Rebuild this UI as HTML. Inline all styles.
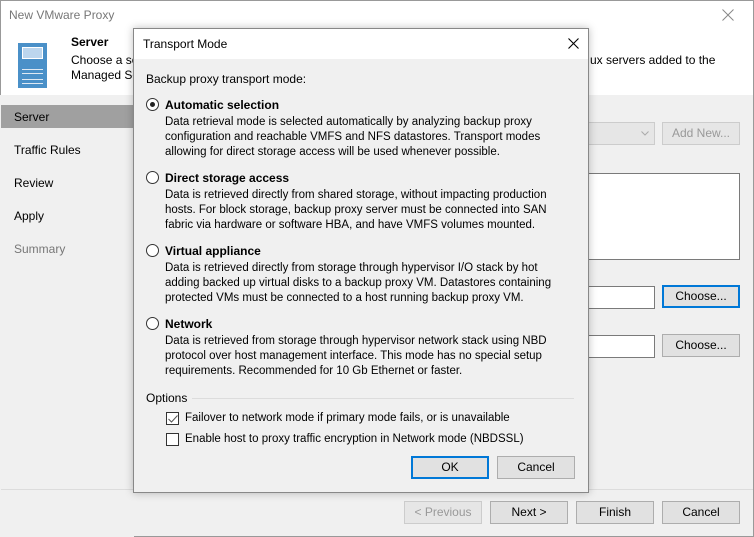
<!DOCTYPE html>
<html><head><style>
*{margin:0;padding:0;box-sizing:border-box}
body{width:754px;height:537px;position:relative;overflow:hidden;background:#f0f0f0;font-family:"Liberation Sans",sans-serif;font-size:12px;color:#000}
.a{position:absolute;white-space:nowrap}
.btn{position:absolute;background:#e1e1e1;border:1px solid #adadad;text-align:center;line-height:21px;font-size:12px}
.rad{position:absolute;width:13px;height:13px;border:1px solid #333;border-radius:50%;background:#fff}
.cb{position:absolute;width:13px;height:13px;border:1px solid #333;background:#fff}
.d{position:absolute;left:165px;line-height:15px;font-size:11.5px;white-space:nowrap}
.h{position:absolute;left:165px;font-weight:bold;font-size:12px}
</style></head><body>
<div class="a" style="left:0;top:0;width:754px;height:95px;background:#fff"></div>
<div class="a" style="left:0;top:0;width:754px;height:537px;border:1px solid #999"></div>
<div class="a" style="left:9px;top:8px;color:#777;font-size:12px">New VMware Proxy</div>
<svg class="a" style="left:722px;top:9px" width="12" height="12"><path d="M0.5 0.5L11.5 11.5M11.5 0.5L0.5 11.5" stroke="#888" stroke-width="1"/></svg>
<div class="a" style="left:18px;top:43px;width:29px;height:45px;background:#4a90c8"></div>
<div class="a" style="left:22px;top:47px;width:21px;height:12px;background:#bcd6ee;border:1px solid #fff"></div>
<div class="a" style="left:22px;top:69px;width:21px;height:15px;border:1px solid #dfe9f3;border-left:none;border-right:none"></div>
<div class="a" style="left:22px;top:73px;width:21px;height:7px;border-top:1px solid #dfe9f3;border-bottom:1px solid #dfe9f3"></div>
<div class="a" style="left:71px;top:35px;font-weight:bold">Server</div>
<div class="a" style="left:71px;top:53px">Choose a se</div>
<div class="a" style="left:71px;top:68px">Managed Se</div>
<div class="a" style="left:590px;top:53px">ux servers added to the</div>
<div class="a" style="left:0;top:95px;width:134px;height:442px;background:#f0f0f0"></div>
<div class="a" style="left:1px;top:105px;width:133px;height:23px;background:#a0a0a0"></div>
<div class="a" style="left:14px;top:110px">Server</div>
<div class="a" style="left:14px;top:143px">Traffic Rules</div>
<div class="a" style="left:14px;top:176px">Review</div>
<div class="a" style="left:14px;top:209px">Apply</div>
<div class="a" style="left:14px;top:242px;color:#777">Summary</div>
<div class="a" style="left:588px;top:122px;width:67px;height:23px;background:#e6e6e6;border:1px solid #ccc"></div>
<svg class="a" style="left:641px;top:131px" width="8" height="5"><path d="M0.5 0.5L4 4L7.5 0.5" stroke="#aaa" fill="none"/></svg>
<div class="btn" style="left:662px;top:122px;width:78px;height:23px;color:#999;border-color:#ccc;background:#e6e6e6">Add New...</div>
<div class="a" style="left:588px;top:173px;width:152px;height:87px;background:#fff;border:1px solid #7a7a7a;border-left:none"></div>
<div class="a" style="left:588px;top:286px;width:67px;height:23px;background:#fff;border:1px solid #7a7a7a;border-left:none"></div>
<div class="btn" style="left:662px;top:285px;width:78px;height:23px;border:2px solid #0078d7;line-height:19px">Choose...</div>
<div class="a" style="left:588px;top:335px;width:67px;height:23px;background:#fff;border:1px solid #7a7a7a;border-left:none"></div>
<div class="btn" style="left:662px;top:334px;width:78px;height:23px">Choose...</div>
<div class="a" style="left:1px;top:489px;width:752px;height:1px;background:#dcdcdc"></div>
<div class="btn" style="left:404px;top:501px;width:78px;height:23px;color:#999;border-color:#ccc;background:#e6e6e6">&lt; Previous</div>
<div class="btn" style="left:490px;top:501px;width:78px;height:23px">Next &gt;</div>
<div class="btn" style="left:576px;top:501px;width:78px;height:23px">Finish</div>
<div class="btn" style="left:662px;top:501px;width:78px;height:23px">Cancel</div>

<div class="a" style="left:133px;top:28px;width:456px;height:465px;background:#f0f0f0;border:1px solid #888;box-shadow:0 0 8px rgba(0,0,0,.25)"></div>
<div class="a" style="left:134px;top:29px;width:454px;height:30px;background:#fff"></div>
<div class="a" style="left:143px;top:37px">Transport Mode</div>
<svg class="a" style="left:568px;top:38px" width="11" height="11"><path d="M0.5 0.5L10.5 10.5M10.5 0.5L0.5 10.5" stroke="#000" stroke-width="1.1"/></svg>
<div class="a" style="left:146px;top:72px">Backup proxy transport mode:</div>
<div class="rad" style="left:146px;top:98px"><div style="position:absolute;left:3px;top:3px;width:5px;height:5px;border-radius:50%;background:#222"></div></div>
<div class="h" style="top:98px">Automatic selection</div>
<div class="d" style="top:115px">Data retrieval mode is selected automatically by analyzing backup proxy<br>configuration and reachable VMFS and NFS datastores. Transport modes<br>allowing for direct storage access will be used whenever possible.</div>
<div class="rad" style="left:146px;top:171px"></div>
<div class="h" style="top:171px">Direct storage access</div>
<div class="d" style="top:188px">Data is retrieved directly from shared storage, without impacting production<br>hosts. For block storage, backup proxy server must be connected into SAN<br>fabric via hardware or software HBA, and have VMFS volumes mounted.</div>
<div class="rad" style="left:146px;top:244px"></div>
<div class="h" style="top:244px">Virtual appliance</div>
<div class="d" style="top:261px">Data is retrieved directly from storage through hypervisor I/O stack by hot<br>adding backed up virtual disks to a backup proxy VM. Datastores containing<br>protected VMs must be connected to a host running backup proxy VM.</div>
<div class="rad" style="left:146px;top:317px"></div>
<div class="h" style="top:317px">Network</div>
<div class="d" style="top:334px">Data is retrieved from storage through hypervisor network stack using NBD<br>protocol over host management interface. This mode has no special setup<br>requirements. Recommended for 10 Gb Ethernet or faster.</div>
<div class="a" style="left:146px;top:391px">Options</div>
<div class="a" style="left:192px;top:398px;width:382px;height:1px;background:#dcdcdc"></div>
<div class="cb" style="left:166px;top:412px"><svg style="position:absolute;left:1px;top:2px" width="10" height="8"><path d="M0.5 4L3.5 7L9.5 0.5" stroke="#555" fill="none"/></svg></div>
<div class="a" style="left:185px;top:412px;font-size:11.5px">Failover to network mode if primary mode fails, or is unavailable</div>
<div class="cb" style="left:166px;top:433px"></div>
<div class="a" style="left:185px;top:433px;font-size:11.5px">Enable host to proxy traffic encryption in Network mode (NBDSSL)</div>
<div class="btn" style="left:411px;top:456px;width:78px;height:23px;border:2px solid #0078d7;line-height:19px">OK</div>
<div class="btn" style="left:497px;top:456px;width:78px;height:23px">Cancel</div>
</body></html>
